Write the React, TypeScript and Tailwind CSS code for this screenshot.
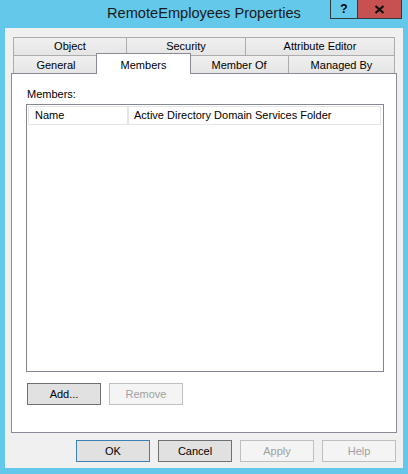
import React from 'react';

const topTabs = [
  { label: 'Object', w: 'w-[113px]' },
  { label: 'Security', w: 'w-[119px]' },
  { label: 'Attribute Editor', w: 'w-[150px] border-r' },
];

function WinButton({ label, variant }: { label: string; variant: 'default' | 'normal' | 'disabled' }) {
  const styles = {
    default: 'bg-[#e1e1e1] border-[#3c7fb1] text-black',
    normal: 'bg-[#e1e1e1] border-[#707070] text-black',
    disabled: 'bg-[#f4f4f4] border-[#bfbfbf] text-[#a0a0a0]',
  }[variant];
  return (
    <div className={`w-[74px] h-[22px] border flex items-center justify-center text-[11px] ${styles}`}>
      {label}
    </div>
  );
}

export default function App() {
  return (
    <div className="w-[408px] h-[474px] bg-[#63c8ea] flex flex-col font-['Liberation_Sans',Arial,sans-serif] text-black">
      {/* title bar */}
      <div className="relative h-[28px] flex items-center justify-center">
        <span className="text-[14.6px] text-[#1a1a1a] -mt-[1px]">RemoteEmployees Properties</span>
        <div className="absolute top-0 right-[6px] flex border border-t-0 border-[#2e3a40]">
          <div className="w-[27px] h-[18px] flex items-center justify-center border-r border-[#2e3a40] text-[12px] font-bold">
            ?
          </div>
          <div className="w-[43px] h-[18px] bg-[#c75050] flex items-center justify-center">
            <svg width="11" height="9" viewBox="0 0 11 9">
              <path d="M1.5 1 L9.5 8 M9.5 1 L1.5 8" stroke="#111" strokeWidth="2.2" />
            </svg>
          </div>
        </div>
      </div>

      {/* client area */}
      <div className="mx-[5px] mb-[6px] flex-1 bg-[#f0f0f0] flex flex-col pt-[9px] px-[6px]">
        {/* tab strip */}
        <div className="ml-[2px] w-[382px] flex flex-col text-[11px]">
          <div className="flex h-[18px]">
            {topTabs.map((t) => (
              <div
                key={t.label}
                className={`${t.w} h-full border-l border-t border-[#acacac] bg-gradient-to-b from-[#f0f0f0] to-[#e5e5e5] flex items-center justify-center`}
              >
                {t.label}
              </div>
            ))}
          </div>
          <div className="flex h-[18px]">
            <div className="w-[85px] h-full border-l border-t border-[#acacac] bg-gradient-to-b from-[#f0f0f0] to-[#e5e5e5] flex items-center justify-center pt-[2px]">
              General
            </div>
            <div className="relative z-10 -mx-[2px] -mt-[2px] w-[95px] h-[21px] bg-white border-l border-t border-r border-[#898c95] flex justify-center pt-[3px]">
              Members
            </div>
            <div className="w-[99px] h-full border-l border-t border-[#acacac] bg-gradient-to-b from-[#f0f0f0] to-[#e5e5e5] flex items-center justify-center pt-[2px]">
              Member Of
            </div>
            <div className="w-[107px] h-full border-l border-t border-r border-[#acacac] bg-gradient-to-b from-[#f0f0f0] to-[#e5e5e5] flex items-center justify-center pt-[2px]">
              Managed By
            </div>
          </div>
        </div>

        {/* panel */}
        <div className="w-[386px] h-[360px] bg-white border border-[#898c95] flex flex-col pl-[14px] pt-[12px]">
          <div className="h-[18px] text-[11px] pl-px">Members:</div>
          <div className="w-[358px] h-[268px] border border-[#828790] flex flex-col">
            <div className="mt-px ml-px mr-[2px] h-[19px] border border-[#e5e5e5] flex items-center text-[11px]">
              <div className="w-[100px] h-full border-r-2 border-[#e5e5e5] flex items-center pl-[6px]">Name</div>
              <div className="pl-[5px]">Active Directory Domain Services Folder</div>
            </div>
          </div>
          <div className="flex gap-[8px] mt-[11px] pl-px">
            <WinButton label="Add..." variant="normal" />
            <WinButton label="Remove" variant="disabled" />
          </div>
        </div>

        {/* dialog buttons */}
        <div className="flex justify-end gap-[8px] mt-[7px] pr-px w-[386px]">
          <WinButton label="OK" variant="default" />
          <WinButton label="Cancel" variant="normal" />
          <WinButton label="Apply" variant="disabled" />
          <WinButton label="Help" variant="disabled" />
        </div>
      </div>
    </div>
  );
}
